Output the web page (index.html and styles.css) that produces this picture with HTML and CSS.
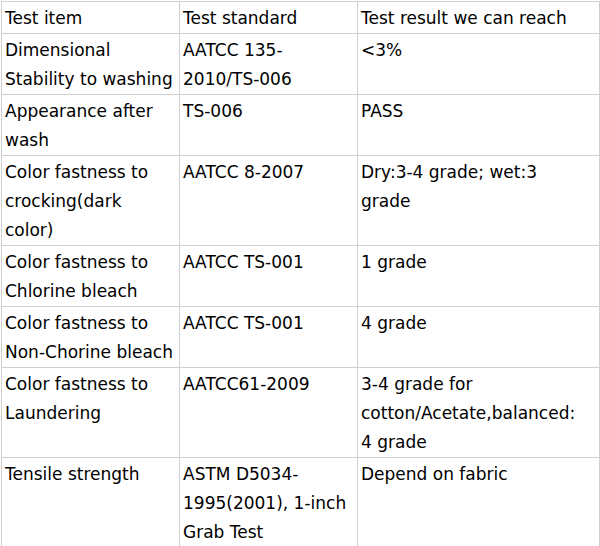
FILE: index.html
```html
<!DOCTYPE html>
<html>
<head>
<meta charset="utf-8">
<link rel="stylesheet" href="styles.css">
</head>
<body>
<table class="spec">
  <colgroup>
    <col class="c1"><col class="c2"><col class="c3">
  </colgroup>
  <tr><td>Test item</td><td>Test standard</td><td>Test result we can reach</td></tr>
  <tr><td>Dimensional<br>Stability to washing</td><td>AATCC 135-<br>2010/TS-006</td><td>&lt;3%</td></tr>
  <tr><td>Appearance after<br>wash</td><td>TS-006</td><td>PASS</td></tr>
  <tr><td>Color fastness to<br>crocking(dark<br>color)</td><td>AATCC 8-2007</td><td>Dry:3-4 grade; wet:3<br>grade</td></tr>
  <tr><td>Color fastness to<br>Chlorine bleach</td><td>AATCC TS-001</td><td>1 grade</td></tr>
  <tr><td>Color fastness to<br>Non-Chorine bleach</td><td>AATCC TS-001</td><td>4 grade</td></tr>
  <tr><td>Color fastness to<br>Laundering</td><td>AATCC61-2009</td><td>3-4 grade for<br>cotton/Acetate,balanced:<br>4 grade</td></tr>
  <tr><td>Tensile strength</td><td>ASTM D5034-<br>1995(2001), 1-inch<br>Grab Test</td><td>Depend on fabric</td></tr>
</table>
</body>
</html>
```
FILE: styles.css
```css
html, body {
  margin: 0;
  padding: 0;
  background: #fff;
}
body {
  padding: 1px 0 0 1px;
}
.spec {
  border-collapse: collapse;
  table-layout: fixed;
  width: 598px;
  font-family: "DejaVu Sans", sans-serif;
  font-size: 17px;
  line-height: 29px;
  color: #000;
}
.c1 { width: 178px; }
.c2 { width: 178px; }
.c3 { width: 242px; }
.spec td {
  border: 1px solid #cfcfcf;
  padding: 2px 3px 0;
  vertical-align: top;
  white-space: nowrap;
  overflow: hidden;
}
```
